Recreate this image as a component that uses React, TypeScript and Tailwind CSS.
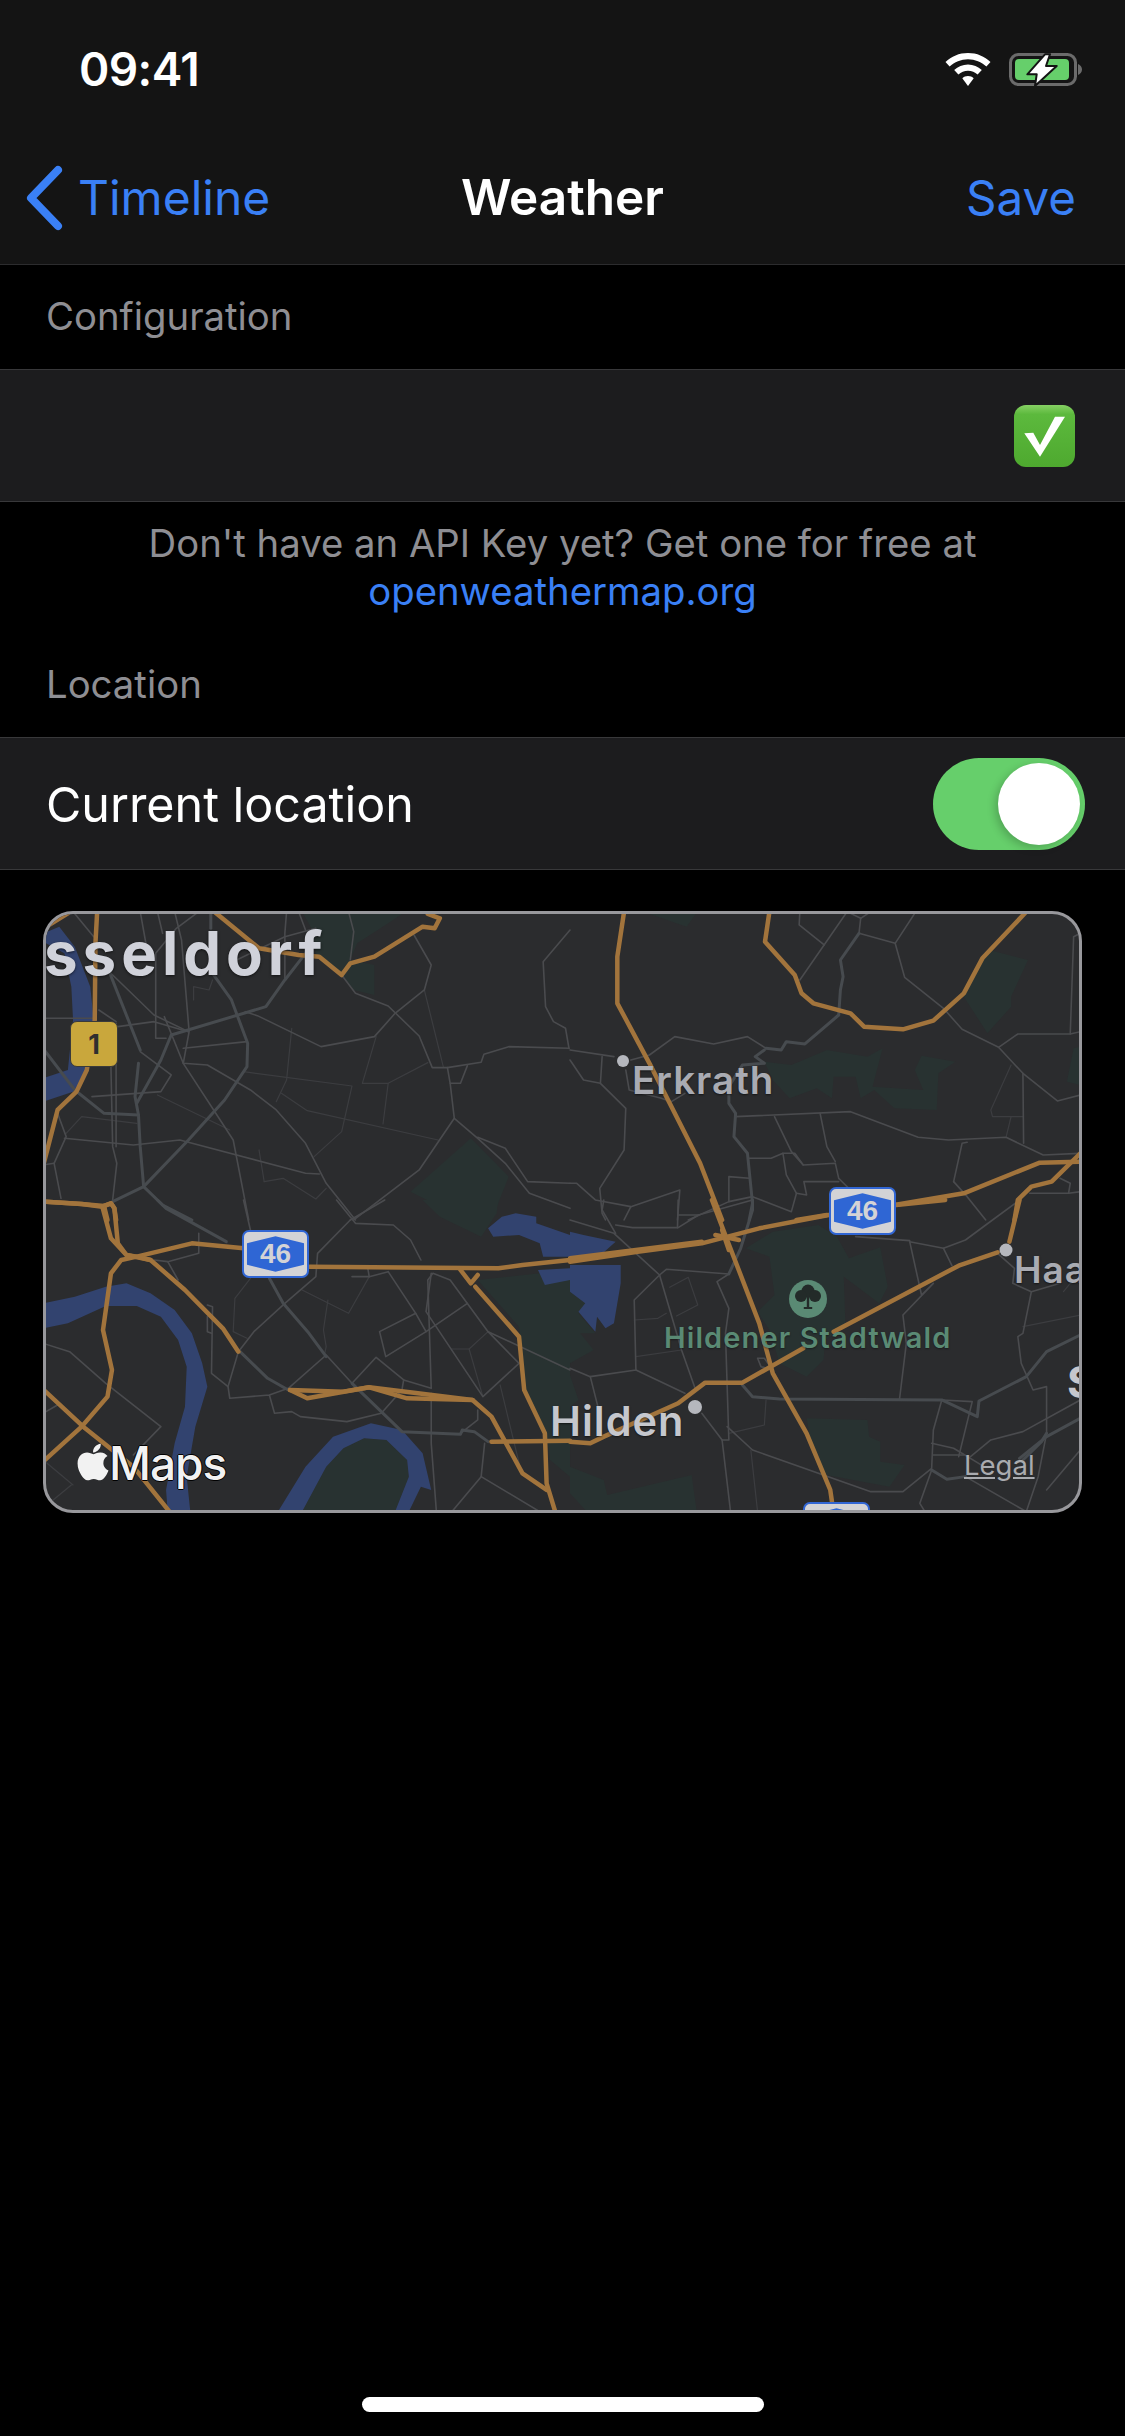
import React from "react";
import { FaApple } from "react-icons/fa";

type Zone = { t: string; parks: string[]; water: string[]; faint: string[]; thin: string[]; thick: string[]; orange: string[] };

const zones: Zone[] = [
  {
    t: "translate(30 900) scale(0.3444 0.3333)",
    parks: [
      "M790,35 L1090,35 L1040,70 L950,130 L930,180 L1000,195 L1000,285 L940,270 L900,215 L830,165 L820,90Z",
      "M1105,875 L1280,715 L1390,830 L1340,960 L1240,960 L1200,925Z",
    ],
    water: ["M38,100 L85,80 L130,140 L175,260 L185,360 L170,510 L125,575 L38,605 L38,535 L110,510 L125,360 L120,260 L100,160 L38,125Z"],
    faint: [
      "M620,515 L935,558 L905,695 L825,770",
      "M730,580 L805,632 L1185,720",
      "M1005,410 L965,550 L1040,550 L1155,488",
      "M1040,550 L1025,672",
      "M1145,270 L1200,500",
      "M370,585 L580,690",
      "M475,300 L475,260 L520,270 L530,240",
      "M105,700 L150,650 L310,670",
      "M760,385 L745,540 L715,605",
      "M680,845 L735,835 L830,897 L860,865",
      "M680,845 L665,750",
    ],
    thin: [
      "M125,35 L185,110", "M320,35 L340,150", "M370,35 L385,100",
      "M420,35 L440,120 L462,395 L445,490 L515,495 L640,570 L715,630 L800,730 L860,850 L945,960",
      "M490,35 L425,85 L365,160 L365,415 L395,415",
      "M745,35 L740,100 L740,240", "M780,35 L800,90", "M925,35 L940,95 L930,180",
      "M830,85 L740,110 L660,150 L600,180",
      "M1115,105 L1165,195 L1145,270 L1060,340 L1000,410 L845,440 L660,347 L625,335",
      "M905,225 L945,280 L1040,318 L1130,408 L1168,503 L1212,503 L1310,487 L1318,463 L1390,440 L1565,445",
      "M1212,503 L1220,550 L1232,655 L1300,715 L1380,790 L1450,880 L1568,925",
      "M1220,550 L1250,550 L1270,497", "M1232,655 L1130,810 L940,960",
      "M1300,712 L1380,745 L1445,845 L1568,850",
      "M1568,90 L1490,185 L1497,320 L1520,365 L1555,385 L1565,445",
      "M38,355 L190,355", "M255,380 L360,365 L460,395", "M225,210 L360,345 L460,395",
      "M390,350 L445,490 L590,720 L635,960",
      "M100,715 L300,735 L435,720 L800,820 L840,822",
      "M80,640 L105,710 L70,790 L90,895", "M38,795 L70,790",
      "M250,370 L250,740", "M235,500 L240,740 L252,790 L240,900",
      "M180,590 L380,575 L410,525 L320,455",
      "M200,330 L250,365", "M445,445 L630,425",
    ],
    thick: [
      "M525,35 L525,85",
      "M530,220 L585,300 L632,430 L630,500 L565,600 L460,720 L330,860 L240,905",
      "M38,445 L130,570 L215,640 L315,645 L320,740 L330,860 L385,915 L470,960",
      "M315,490 L305,590 L315,645",
      "M800,160 L740,240 L685,320 L410,405 L380,480 L310,610",
      "M230,215 L320,450",
    ],
    orange: [
      "M195,35 L190,130 L188,360 L165,510 L135,575 L80,630 L40,790",
      "M535,35 L665,145 L780,165 L840,170 L905,225 L930,190 L1000,170 L1140,80 L1175,85 L1190,55 L1155,42",
      "M38,905 L150,912 L215,918 L235,910 L245,925 L250,960",
      "M215,918 L225,960",
      "M38,86 L110,40",
    ],
  },
  {
    t: "translate(570 900) scale(0.338 0.3333)",
    parks: [
      "M225,38 L375,38 L345,80Z",
      "M575,485 L655,495 L760,450 L880,470 L925,445 L895,560 L1045,570 L1020,510 L1040,467 L1140,485 L1090,520 L1085,630 L960,625 L900,570 L860,595 L845,530 L780,530 L775,595 L730,565 L650,595 L600,540Z",
      "M1240,150 L1355,180 L1305,290 L1305,320 L1235,400 L1165,290 L1220,175Z",
      "M1490,445 L1510,440 L1510,555 L1470,545Z",
    ],
    water: [],
    faint: ["M1305,495 L1245,630 L1250,650 L1340,650", "M1305,650 L1290,712"],
    thin: [
      "M0,450 L130,470", "M180,480 L235,465 L310,410 L425,432 L525,410 L580,445",
      "M860,55 L820,35", "M860,55 L890,35", "M855,100 L860,55",
      "M855,100 L962,130 L990,232 L1105,325 L1160,388 L1268,442 L1340,520 L1442,603 L1510,585",
      "M962,130 L1020,40", "M680,240 L820,35", "M680,35 L678,75 L752,135",
      "M1268,442 L1325,402 L1480,402 L1510,395", "M1480,402 L1490,110 L1510,100",
      "M0,480 L40,540 L90,550 L165,625 L160,750 L88,865 L95,940 L105,960",
      "M165,510 L175,570 L270,595 L300,605 L340,580", "M95,470 L90,550",
      "M490,650 L830,635 L1030,712 L1120,720 L1290,712 L1400,765 L1510,760",
      "M605,650 L655,755 L690,795 L785,790 L795,835 L830,870", "M740,640 L760,740 L785,785",
      "M530,775 L595,775 L630,760 L665,760 L690,795",
      "M630,760 L640,825 L670,880 L655,935 L540,890 L470,905 L350,960",
      "M470,905 L470,830 L530,835", "M670,880 L700,885 L692,845 L795,845",
      "M0,850 L20,850 L75,900 L180,920 L325,870 L318,960", "M180,920 L160,960", "M320,945 L380,945",
      "M1135,845 L1160,730 L1175,727", "M1135,845 L1175,890 L1230,960",
      "M1340,520 L1342,730", "M1360,880 L1475,880 L1480,850 L1450,835", "M1475,880 L1510,875",
    ],
    thick: [
      "M580,445 L625,450 L640,425 L695,432 L795,345",
      "M795,345 L800,270 L808,230 L800,180 L855,100",
      "M548,470 L575,450 M548,470 L575,490 L510,495 L470,560 L470,610 L490,640 L485,710 L525,760 L540,910 L530,960",
    ],
    orange: [
      "M160,35 L140,170 L140,310 L235,490 L385,790 L450,960",
      "M590,35 L577,125 L665,225 L685,280 L720,310 L830,340 L870,380 L985,388 L1075,362 L1165,280 L1220,175 L1350,35",
      "M670,960 L760,945", "M960,915 L1165,880 L1390,788 L1510,785",
      "M1510,760 L1425,845 L1365,860 L1325,900 L1315,960",
    ],
  },
  {
    t: "translate(30 1200) scale(0.3444 0.3333)",
    parks: [
      "M1140,0 L1360,0 L1355,40 L1310,110 L1190,50Z",
      "M1300,240 L1568,210 L1568,830 L1510,780 L1500,700 L1440,570 L1420,380Z",
      "M790,935 L860,800 L910,745 L970,715 L1035,720 L1095,780 L1100,830 L1060,935Z",
    ],
    water: [
      "M38,310 L130,290 L220,260 L280,250 L350,280 L420,330 L470,400 L500,490 L515,560 L480,680 L455,830 L465,930 L400,935 L395,870 L420,730 L450,620 L455,500 L430,420 L380,350 L310,318 L220,318 L110,370 L38,385Z",
      "M720,935 L800,800 L880,710 L990,670 L1080,690 L1140,760 L1165,870 L1135,860 L1100,935 L1060,935 L1100,830 L1095,780 L1035,720 L970,715 L910,745 L860,800 L790,935Z",
      "M1330,85 L1370,50 L1410,40 L1470,50 L1470,70 L1568,105 L1568,170 L1490,170 L1480,130 L1420,105 L1345,110Z",
      "M1475,210 L1568,205 L1568,240 L1495,255Z",
    ],
    faint: [
      "M790,270 L925,340 L985,230", "M865,300 L852,390 L860,440 L855,465",
      "M640,235 L595,295 L590,395 L630,415", "M1225,447 L1275,447 L1315,590",
      "M1275,447 L1330,395", "M1365,555 L1425,810", "M38,780 L125,855", "M120,855 L38,925",
    ],
    thin: [
      "M620,0 L640,90",
      "M890,0 L945,70 L1055,75 L1105,120 L1135,180", "M1030,0 L930,60",
      "M930,60 L835,160 L830,230 L740,310 L650,395 L605,455 L575,560 L580,595 L695,585 L750,565 L860,465 L935,550 L1005,472 L1085,540 L1080,570 L1020,640 L920,665 L785,650 L760,635 L710,640 L695,585",
      "M1085,540 L1165,565 L1155,240 L1170,220 L1220,240 L1330,395 L1568,510",
      "M1165,220 L1150,335 L1315,590 L1420,490 L1330,395",
      "M1015,395 L1120,340 L1150,395 L1033,470Z", "M1150,395 L1270,310", "M1040,215 L1120,340",
      "M985,230 L1040,215", "M935,230 L985,230 L980,200",
      "M490,100 L490,160 L400,185 L360,180", "M400,185 L430,240",
      "M515,315 L530,320 L527,520 L575,560", "M515,350 L515,395 L527,400",
      "M38,430 L115,455 L220,550 L380,680 L300,765", "M1165,580 L1165,730 L1180,935",
      "M1320,730 L1310,830 L1225,935", "M1310,830 L1480,935", "M1300,630 L1300,660 L1250,700",
      "M38,640 L80,615",
    ],
    thick: [
      "M370,0 L395,25 L570,125", "M610,455 L690,535 L750,570",
      "M860,470 L810,400 L735,310 L695,235",
      "M935,550 L1080,695 L1250,703 L1255,690 L1290,695 L1330,725",
    ],
    orange: [
      "M38,5 L150,12 L210,20 L235,10 L245,25 L255,130 L280,165 L350,180 L450,270 L560,385 L605,455",
      "M210,20 L235,115 L280,165 L310,170 L470,130 L620,145",
      "M350,180 L310,170 L265,180 L235,220 L212,390 L238,510 L225,590 L150,680 L38,785",
      "M38,568 L160,685 L300,800 L405,935",
      "M812,200 L1360,205 L1430,195 L1568,180",
      "M1293,260 L1420,410 L1435,570 L1495,700 L1500,850 L1525,935",
      "M755,570 L805,595 L985,562 L1285,600 L1340,650 L1430,820 L1500,870",
      "M755,570 L910,575 L985,562 L1095,595 L1285,600",
      "M1340,725 L1568,722",
      "M1250,210 L1280,250 L1300,225",
    ],
  },
  {
    t: "translate(570 1200) scale(0.338 0.3333)",
    parks: [
      "M520,145 L600,95 L735,75 L790,110 L825,175 L918,142 L940,260 L915,310 L810,230 L815,380 L755,420 L750,480 L700,530 L620,490 L590,390 L555,335 L605,285 L590,170Z",
      "M0,275 L45,310 L25,340 L75,400 L30,400 L70,450 L0,490Z",
      "M0,525 L25,600 L0,620Z",
      "M700,655 L880,660 L885,710 L918,725 L918,785 L990,795 L945,860 L760,825 L720,770Z",
      "M0,800 L100,840 L110,885 L360,825 L375,935 L50,935 L0,880Z",
    ],
    water: [
      "M0,95 L40,105 L135,125 L85,170 L0,175Z",
      "M0,195 L150,195 L150,250 L130,370 L105,385 L80,350 L75,395 L25,335 L45,310 L0,275Z",
    ],
    faint: [
      "M295,262 L350,232 L378,315 L315,348", "M190,360 L260,355 L285,340", "M195,470 L330,450",
      "M1340,380 L1510,345", "M1460,275 L1480,250 L1510,240", "M535,750 L555,935", "M470,700 L575,675 L580,600",
    ],
    thin: [
      "M0,60 L130,100 L265,225 L190,300 L195,510 L60,530 L0,505", "M100,0 L95,30 L135,100",
      "M135,75 L185,83 L320,83 L380,45 L540,0", "M320,0 L318,83",
      "M470,222 L435,245 L470,325 L460,400 L470,720 L450,720 L390,640",
      "M265,225 L285,208 L470,222",
      "M265,225 L330,450 L370,565", "M195,510 L340,580", "M60,530 L90,650",
      "M975,597 L995,430 L985,345 L1075,250 L1040,285 L1005,125 L1105,145 L1170,120 L1230,75 L1330,0",
      "M845,110 L1005,122", "M1105,145 L1130,197",
      "M1265,160 L1315,205 L1310,250 L1365,275 L1340,400 L1325,410 L1335,490 L1370,570 L1410,560 L1410,700 L1385,830 L1350,935",
      "M1365,275 L1450,250",
      "M1100,600 L1075,690 L1070,805 L985,875 L890,875 L540,750 L465,680",
      "M1070,810 L1035,910 L1050,935", "M1070,730 L1135,745 L1225,800", "M1075,765 L1165,765",
      "M1100,600 L1190,605 L1150,770", "M1185,770 L1245,720 L1340,695 L1510,600",
      "M1510,750 L1410,870", "M450,720 L475,935", "M1170,830 L1350,935",
      "M555,475 L575,475 L600,510 L565,500Z",
    ],
    thick: [
      "M470,222 L505,145 L540,30 L540,0",
      "M510,555 L540,590 L620,597 L1100,600 L1205,650 L1210,603 L1350,530 L1410,455 L1510,405",
      "M1070,810 L1115,838 L1170,830",
      "M1330,775 L1410,710 L1510,655", "M1340,780 L1395,725 L1410,700",
    ],
    orange: [
      "M420,0 L465,120 L560,370 L600,520 L700,700 L770,870 L775,905",
      "M0,185 L200,155 L390,130 L560,85 L765,45", "M0,175 L390,125",
      "M965,15 L1110,0", "M1330,0 L1300,125",
      "M1265,157 L1150,197 L780,395", "M690,445 L510,548 L400,548 L320,610 L100,710 L60,730 L0,725",
      "M430,105 L500,120", "M450,90 L470,150",
    ],
  },
];

function Layer({ pick, stroke, width, fill }: { pick: (z: Zone) => string[]; stroke?: string; width?: number; fill?: string }) {
  return (
    <>
      {zones.map((z, i) => (
        <g key={i} transform={z.t}>
          {pick(z).map((d, j) => (
            <path
              key={j}
              d={d}
              fill={fill ?? "none"}
              stroke={stroke ?? "none"}
              strokeWidth={width}
              strokeLinejoin="round"
              strokeLinecap="round"
              vectorEffect="non-scaling-stroke"
            />
          ))}
        </g>
      ))}
    </>
  );
}

function Shield({ className, label }: { className: string; label?: string }) {
  return (
    <div className={`absolute w-[67px] h-[48px] rounded-[7px] border-2 border-[#3166d4] bg-[#d3d3d6] flex items-center justify-center ${className}`}>
      <svg viewBox="0 0 60 40" className="absolute inset-[2px] w-[59px] h-[40px]">
        <path d="M1 9 L30 2 L59 9 L59 31 L30 38 L1 31Z" fill="#2f66d4" />
      </svg>
      {label && <span className="relative text-[28px] leading-none font-bold text-[#d3d3d6] [font-family:'Liberation_Sans',sans-serif]">{label}</span>}
    </div>
  );
}

function MapCard() {
  return (
    <div className="relative ml-[43px] w-[1039px] mt-[41px] h-[602px] rounded-[30px] border-[3px] border-[#98989c] bg-[#2b2c2e] overflow-hidden shrink-0">
      <svg viewBox="46 914 1033 596" className="absolute inset-0 w-[1033px] h-[596px]">
        <Layer pick={(z) => z.parks} fill="#283231" />
        <Layer pick={(z) => z.water} fill="#32436f" />
        <Layer pick={(z) => z.faint} stroke="#3c3d40" width={1.2} />
        <Layer pick={(z) => z.thin} stroke="#4a4b4e" width={1.6} />
        <Layer pick={(z) => z.thick} stroke="#474b4f" width={3} />
        <Layer pick={(z) => z.orange} stroke="#a2743c" width={4.5} />
        <circle cx="623" cy="1061" r="6" fill="#b5b7bd" />
        <circle cx="695" cy="1407" r="7" fill="#b5b7bd" />
        <circle cx="1006" cy="1250" r="6.5" fill="#b5b7bd" />
        <circle cx="808" cy="1299" r="19" fill="#5a8a74" />
        <g fill="#232b29">
          <circle cx="808" cy="1291" r="6.5" />
          <circle cx="801" cy="1296" r="6" />
          <circle cx="815" cy="1296" r="6" />
          <path d="M806.8 1296 h2.4 v11 h3 v2 h-8.4 v-2 h3z" />
        </g>
      </svg>

      <div className="absolute left-[24px] top-[107px] w-[48px] h-[46px] rounded-[7px] bg-[#c9a73c] border border-[#3a3a3a] flex items-center justify-center">
        <span className="text-[27px] leading-none font-bold text-[#2f2f2f]">1</span>
      </div>
      <Shield className="left-[196px] top-[316px]" label="46" />
      <Shield className="left-[783px] top-[273px]" label="46" />
      <Shield className="left-[757px] top-[588px]" />

      <span className="absolute left-[-2px] top-[9px] text-[60px] leading-none font-bold tracking-[5px] text-[#d0d2da] [text-shadow:0_1px_3px_#0009]">sseldorf</span>
      <span className="absolute left-[586px] top-[147px] text-[38.5px] leading-none font-semibold tracking-[1px] text-[#a9abb2] [text-shadow:0_1px_2px_#0008]">Erkrath</span>
      <span className="absolute left-[504px] top-[487px] text-[41.5px] leading-none font-semibold tracking-[1px] text-[#c5c7cd] [text-shadow:0_1px_2px_#0008]">Hilden</span>
      <span className="absolute left-[968px] top-[337px] text-[37px] leading-none font-semibold tracking-[1px] text-[#a9abb2] [text-shadow:0_1px_2px_#0008]">Haa</span>
      <span className="absolute left-[1021px] top-[446px] text-[44px] leading-none font-bold text-[#c5c7cd]">S</span>
      <span className="absolute left-[618px] top-[409px] text-[29px] leading-none font-semibold tracking-[1.1px] whitespace-nowrap text-[#5a8a74] [text-shadow:0_1px_2px_#0006]">Hildener Stadtwald</span>

      <FaApple className="absolute left-[29px] top-[527px] w-[36px] h-[42px] text-[#f2f2f2]" />
      <span className="absolute left-[63px] top-[526px] text-[46px] leading-none font-medium tracking-[-1px] text-[#f2f2f2] [text-shadow:-1px_0_#000,1px_0_#000,0_-1px_#000,0_1px_#000]">Maps</span>
      <span className="absolute left-[918px] top-[538px] text-[27.5px] leading-none underline text-[#a9abaf]">Legal</span>
    </div>
  );
}

export default function App() {
  return (
    <div className="relative w-[1125px] h-[2436px] bg-black flex flex-col [font-family:Inter,sans-serif] overflow-hidden">
      <header className="h-[265px] bg-[#141414] border-b border-[#2c2c2e] shrink-0">
        <div className="h-[132px] pt-[6px] pl-[79px] pr-[43px] flex items-center justify-between">
          <span className="text-[46px] leading-none font-semibold text-white tracking-[-0.6px]">09:41</span>
          <div className="flex items-center gap-[18px]">
            <svg viewBox="0 0 46 33" className="w-[46px] h-[33px]" fill="#fff">
              <path d="M23 0 C14 0 6.5 3.4 0.5 9 L4.6 13.6 C9.5 9 16 6.2 23 6.2 C30 6.2 36.5 9 41.4 13.6 L45.5 9 C39.5 3.4 32 0 23 0Z" />
              <path d="M23 11.5 C17.6 11.5 13 13.6 9.2 17 L13.4 21.6 C16 19.2 19.3 17.8 23 17.8 C26.7 17.8 30 19.2 32.6 21.6 L36.8 17 C33 13.6 28.4 11.5 23 11.5Z" />
              <path d="M23 23 C20.8 23 18.8 23.9 17.3 25.2 L23 33 L28.7 25.2 C27.2 23.9 25.2 23 23 23Z" />
            </svg>
            <svg viewBox="0 0 73 33" className="w-[73px] h-[33px]">
              <rect x="1.5" y="1.5" width="65" height="30" rx="8" fill="none" stroke="#6b6b6b" strokeWidth="3" />
              <path d="M69 11 C71.5 12 73 14 73 16.5 C73 19 71.5 21 69 22Z" fill="#6b6b6b" />
              <rect x="6" y="6" width="54" height="21" rx="4" fill="#66cf6b" />
              <path d="M36 1.3 L18.3 21.3 L27.7 21.3 L26 33 L47.7 13 L37 13 L41 1.3Z" fill="#fff" stroke="#141414" strokeWidth="2" strokeLinejoin="round" />
            </svg>
          </div>
        </div>
        <div className="h-[132px] grid grid-cols-3 items-center">
          <div className="flex items-center pl-[24px]">
            <svg viewBox="0 0 40 66" className="w-[40px] h-[66px] shrink-0">
              <path d="M34 5 L7 33 L34 61" fill="none" stroke="#3a80f6" strokeWidth="8" strokeLinecap="round" strokeLinejoin="round" />
            </svg>
            <span className="ml-[14px] text-[48px] leading-none text-[#3a80f6]">Timeline</span>
          </div>
          <div className="text-center text-[49.5px] leading-none font-semibold text-white">Weather</div>
          <div className="text-right pr-[49px] text-[47.5px] leading-none text-[#3a80f6]">Save</div>
        </div>
      </header>

      <div className="h-[104px] flex items-center px-[46px] text-[38.3px] text-[#8e8e93] shrink-0">Configuration</div>
      <div className="h-[133px] bg-[#1c1c1e] border-y border-[#38383a] flex items-center justify-end pr-[50px] shrink-0">
        <svg viewBox="0 0 61 62" className="w-[61px] h-[62px]">
          <defs>
            <linearGradient id="chk" x1="0" y1="0" x2="0" y2="1">
              <stop offset="0" stopColor="#86d064" />
              <stop offset="0.15" stopColor="#5cb93d" />
              <stop offset="1" stopColor="#4ea92f" />
            </linearGradient>
          </defs>
          <rect width="61" height="62" rx="12" fill="url(#chk)" />
          <path d="M10.3 28.3 L19.3 27.7 L26 40 L41 11.7 L51 11.7 L26 51.7Z" fill="#fff" />
        </svg>
      </div>

      <div className="pt-[17px] text-center text-[38.3px] leading-[48px] text-[#8e8e93] shrink-0">
        <p>Don't have an API Key yet? Get one for free at</p>
        <p className="text-[#3a80f6]">openweathermap.org</p>
      </div>

      <div className="h-[122px] flex items-end pb-[29px] px-[46px] text-[38.3px] leading-[48px] text-[#8e8e93] shrink-0">Location</div>
      <div className="h-[133px] bg-[#1c1c1e] border-y border-[#38383a] flex items-center justify-between pl-[46px] pr-[40px] shrink-0">
        <span className="pt-[3px] text-[48.4px] leading-none text-white">Current location</span>
        <div className="relative w-[152px] h-[92px] rounded-full bg-[#66cf6b]">
          <div className="absolute right-[5px] top-[5px] w-[82px] h-[82px] rounded-full bg-white shadow-[-3px_3px_8px_#0003]" />
        </div>
      </div>

      <MapCard />

      <div className="mt-auto mb-[24px] self-center w-[402px] h-[15px] rounded-full bg-white" />
    </div>
  );
}
